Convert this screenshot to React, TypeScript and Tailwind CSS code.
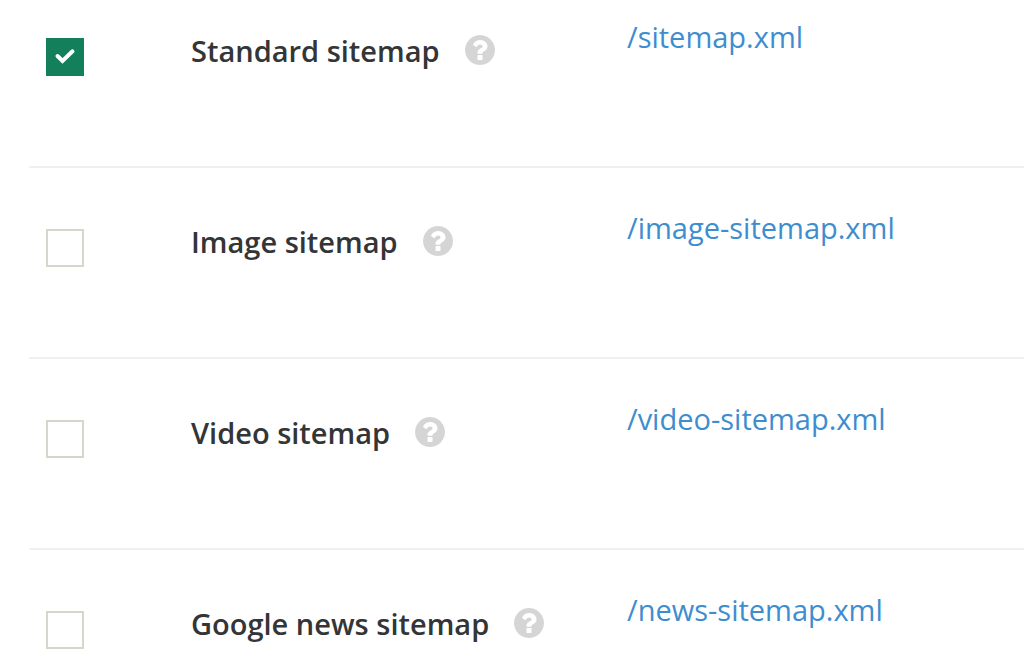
interface SitemapItem {
    id: string;
    label: string;
    path: string;
    enabled: boolean;
}

const sitemaps: SitemapItem[] = [
    { id: "standard", label: "Standard sitemap", path: "/sitemap.xml", enabled: true },
    { id: "image", label: "Image sitemap", path: "/image-sitemap.xml", enabled: false },
    { id: "video", label: "Video sitemap", path: "/video-sitemap.xml", enabled: false },
    { id: "news", label: "Google news sitemap", path: "/news-sitemap.xml", enabled: false },
];

function HelpIcon() {
    return (
        <svg viewBox="128 128 1536 1536" className="size-[30px]" fill="currentColor" aria-hidden="true">
            <path d="M1024 1376v-192q0-14-9-23t-23-9h-192q-14 0-23 9t-9 23v192q0 14 9 23t23 9h192q14 0 23-9t9-23zm256-672q0-88-55.500-163t-138.500-116-170-41q-243 0-371 213-15 24 8 42l132 100q7 6 19 6 16 0 25-12 53-68 86-92 34-24 86-24 48 0 85.500 26t37.500 59q0 38-20 61t-68 45q-63 28-115.500 86.500t-52.500 125.500v36q0 14 9 23t23 9h192q14 0 23-9t9-23q0-19 21.500-49.500t54.500-49.500q32-18 49-28.500t46-35 44.500-48 28-60.500 12.500-81zm384 192q0 209-103 385.500t-279.500 279.500-385.500 103-385.500-103-279.500-279.500-103-385.500 103-385.500 279.500-279.500 385.500-103 385.500 103 279.500 279.500 103 385.500z" />
        </svg>
    );
}

function SitemapRow({ item }: { item: SitemapItem }) {
    return (
        <li className="flex min-h-[191px] items-start border-b-2 border-[#f0f0f0] pl-[17px]">
            <div className="relative mt-[61px] mr-[107px] size-[38px] shrink-0">
                <input
                    id={item.id}
                    type="checkbox"
                    defaultChecked={item.enabled}
                    className="peer block size-full appearance-none border-2 border-[#d8d5cc] bg-white checked:border-[#147f5b] checked:bg-[#147f5b]"
                />
                <svg
                    viewBox="0 0 38 38"
                    className="pointer-events-none absolute inset-0 hidden size-full peer-checked:block"
                    fill="none"
                    stroke="white"
                    strokeWidth="4"
                    strokeLinecap="round"
                    aria-hidden="true"
                >
                    <path d="M11.500 18l5 5L26.500 13.300" />
                </svg>
            </div>

            <div className="mt-[54px] flex w-[436px] shrink-0 items-start gap-[25px]">
                <label htmlFor={item.id} className="text-[29px] leading-10 font-semibold whitespace-nowrap">
                    {item.label}
                </label>
                <button type="button" aria-label={`Help for ${item.label}`} className="mt-1 text-[#d5d5d5]">
                    <HelpIcon />
                </button>
            </div>

            <a href={item.path} className="mt-10 text-[29px] leading-10 whitespace-nowrap text-[#3e8dcf]">
                {item.path}
            </a>
        </li>
    );
}

export default function App() {
    return (
        <main className="h-screen overflow-hidden bg-white pl-[29px] font-['Open_Sans',sans-serif] text-[#333536]">
            {/* The list is scrolled so that the first row starts above the fold */}
            <ul className="-mt-[23px]">
                {sitemaps.map((item) => (
                    <SitemapRow key={item.id} item={item} />
                ))}
            </ul>
        </main>
    );
}
